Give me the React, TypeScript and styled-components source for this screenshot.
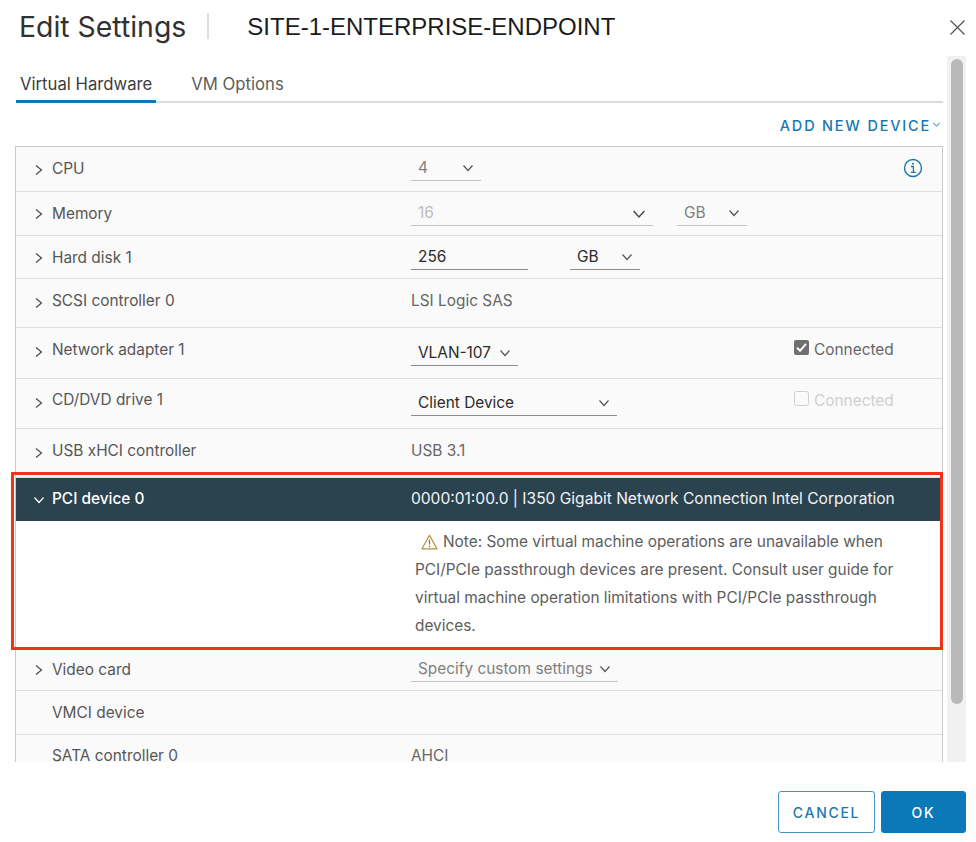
import React from 'react';
import styled, { createGlobalStyle } from 'styled-components';

const GlobalStyle = createGlobalStyle`
    html, body {
        margin: 0;
        padding: 0;
        background: #ffffff;
    }
    body {
        font-family: Inter, "Open Sans", "Liberation Sans", sans-serif;
        color: #565656;
    }
`;

const Dialog = styled.div`
    width: 976px;
    height: 842px;
    overflow: hidden;
    background: #ffffff;
`;

const Header = styled.header`
    height: 56px;
    display: flex;
    align-items: flex-start;
    padding-left: 19px;
    padding-right: 10px;
    box-sizing: border-box;
`;

const Title = styled.h1`
    margin: 10px 0 0;
    font-size: 28.4px;
    line-height: 34px;
    font-weight: 400;
    color: #313131;
    white-space: nowrap;
`;

const TitleDivider = styled.span`
    width: 2px;
    height: 26px;
    margin: 13px 38px 0 21px;
    background: #dedede;
`;

const VmName = styled.h2`
    margin: 11px 0 0;
    font-family: "Liberation Sans", Arial, sans-serif;
    font-size: 24px;
    line-height: 32px;
    font-weight: 400;
    color: #1c1c1c;
    white-space: nowrap;
`;

const CloseButton = styled.button`
    margin: 19px 0 0 auto;
    padding: 0;
    width: 17px;
    height: 17px;
    border: 0;
    background: none;
    display: block;
`;

const Main = styled.main`
    height: 706px;
    display: flex;
    padding-left: 5px;
    padding-right: 10px;
    gap: 4px;
`;

const Content = styled.div`
    width: 928px;
    height: 706px;
    padding-left: 10px;
    overflow: hidden;
`;

const Tabs = styled.nav`
    height: 47px;
    box-sizing: border-box;
    margin-left: 1px;
    display: flex;
    align-items: flex-end;
    border-bottom: 2px solid #dcdcdc;
`;

const Tab = styled.div<{ $active?: boolean }>`
    box-sizing: border-box;
    padding: 20px 4px 0;
    margin-right: ${({ $active }) => ($active ? '31px' : '0')};
    margin-bottom: -2px;
    height: 47px;
    border-bottom: 3px solid ${({ $active }) => ($active ? '#0f78b6' : 'transparent')};
    font-size: 16.7px;
    line-height: 17px;
    color: ${({ $active }) => ($active ? '#3d3d3d' : '#5c5c5c')};
    white-space: nowrap;
`;

const AddRow = styled.div`
    height: 43px;
    display: flex;
    justify-content: flex-end;
    align-items: flex-start;
    gap: 2px;
    padding-top: 15px;
    padding-right: 3px;
    box-sizing: border-box;
`;

const AddLink = styled.span`
    font-size: 14.5px;
    line-height: 16px;
    font-weight: 500;
    letter-spacing: 1.8px;
    color: #1b78ad;
    white-space: nowrap;
`;

const Table = styled.div`
    border-top: 1px solid #c9c9c9;
    border-left: 1px solid #c9c9c9;
    border-right: 1px solid #c9c9c9;
    background: #fafafa;
`;

const Row = styled.div<{ $height: number; $top: number }>`
    height: ${({ $height }) => $height}px;
    box-sizing: border-box;
    border-bottom: 1px solid #dfdfdf;
    padding-top: ${({ $top }) => $top}px;
    display: grid;
    grid-template-columns: 395px 1fr;
    font-size: 15.4px;
    line-height: 18px;
`;

const LabelCell = styled.div`
    display: flex;
    align-items: flex-start;
`;

const ChevronSlot = styled.span<{ $drop: number }>`
    width: 36px;
    height: 18px;
    display: flex;
    justify-content: flex-end;
    padding-right: 8px;
    padding-top: ${({ $drop }) => $drop}px;
    box-sizing: border-box;
    flex-shrink: 0;
`;

const Label = styled.span<{ $flush?: boolean }>`
    margin-top: ${({ $flush }) => ($flush ? '0' : '1px')};
    color: #565656;
    white-space: nowrap;
`;

const ValueCell = styled.div`
    display: flex;
    align-items: flex-start;
`;

const PlainValue = styled.span<{ $flush?: boolean }>`
    margin-top: ${({ $flush }) => ($flush ? '0' : '1px')};
    color: #666666;
    white-space: nowrap;
`;

const Select = styled.div<{ $width: number; $tone?: string; $gap?: number; $drop?: number }>`
    width: ${({ $width }) => $width}px;
    height: 27px;
    box-sizing: border-box;
    margin-top: ${({ $drop }) => ($drop ?? 0) - 5}px;
    margin-right: ${({ $gap }) => $gap ?? 0}px;
    padding: 5px 8px 0 7px;
    display: flex;
    justify-content: space-between;
    align-items: flex-start;
    border-bottom: 1px solid ${({ $tone }) => ($tone === 'dark' ? '#8c8c8c' : '#c4c4c4')};
    color: ${({ $tone }) => ($tone === 'dark' ? '#2b2b2b' : $tone === 'faint' ? '#bdbdbd' : '#808080')};
    white-space: nowrap;
`;

const RowEnd = styled.div`
    margin-left: auto;
    display: flex;
    align-items: flex-start;
`;

const CheckLabel = styled.label<{ $disabled?: boolean }>`
    width: 148px;
    display: flex;
    align-items: flex-start;
    gap: 5px;
    color: ${({ $disabled }) => ($disabled ? '#d0d0d0' : '#666666')};
`;

const CheckText = styled.span`
    margin-top: 1px;
`;

const InfoSlot = styled.span`
    width: 39px;
    display: block;
    margin-top: -1px;
`;

const Highlighted = styled.section`
    position: relative;

    &::after {
        content: '';
        position: absolute;
        left: -5px;
        right: -1px;
        top: -6px;
        bottom: -3px;
        border: 3px solid #ef3418;
        pointer-events: none;
    }
`;

const ExpandedRow = styled.div`
    height: 43px;
    box-sizing: border-box;
    padding-top: 12px;
    margin-right: 2px;
    display: grid;
    grid-template-columns: 395px 1fr;
    font-size: 15.4px;
    line-height: 18px;
    background: #2b424f;
    color: #f2f4f5;
`;

const ExpandedLabel = styled.span`
    font-weight: 500;
    color: #ffffff;
    white-space: nowrap;
`;

const ExpandedValue = styled.span`
    white-space: nowrap;
    font-size: 15.55px;
`;

const Note = styled.div`
    height: 126px;
    box-sizing: border-box;
    margin-right: 2px;
    padding: 7px 40px 0 399px;
    background: #ffffff;
    font-size: 15.4px;
    line-height: 28px;
    color: #5d5d5d;
`;

const WarnIcon = styled.svg`
    width: 17px;
    height: 16px;
    margin-left: 6px;
    margin-right: 5px;
    vertical-align: -3px;
`;

const Scrollbar = styled.div`
    width: 19px;
    height: 706px;
    box-sizing: border-box;
    padding: 3px 3px 0 4px;
    background: #f1f1f1;
`;

const ScrollThumb = styled.div`
    height: 645px;
    border-radius: 6px;
    background: #b9b9b9;
`;

const Footer = styled.footer`
    display: flex;
    justify-content: flex-end;
    gap: 6px;
    padding: 29px 10px 0 0;
`;

const Button = styled.button<{ $primary?: boolean }>`
    width: ${({ $primary }) => ($primary ? '85px' : '97px')};
    height: 42px;
    box-sizing: border-box;
    border-radius: 3px;
    border: 1px solid ${({ $primary }) => ($primary ? '#0b79b8' : '#4b93bf')};
    background: ${({ $primary }) => ($primary ? '#0b79b8' : '#ffffff')};
    color: ${({ $primary }) => ($primary ? '#ffffff' : '#1b78ad')};
    font-family: inherit;
    font-size: 14px;
    font-weight: 500;
    letter-spacing: 1.7px;
    padding: 0;
`;

const Chevron = ({ dir = 'right', size = 10, color = '#4a4a4a' }: { dir?: 'right' | 'down'; size?: number; color?: string }) => (
    <svg width={size} height={size} viewBox="0 0 10 10" fill="none" style={{ flexShrink: 0, overflow: 'visible' }}>
        <path
            d={dir === 'right' ? 'M2 .5 7.5 5 2 9.5' : 'M.5 2.5 5 7.5 9.5 2.5'}
            stroke={color}
            strokeWidth={size < 9 ? 1.4 : 1.2}
        />
    </svg>
);

const SelectChevron = ({ color = '#555555', size = 10 }: { color?: string; size?: number }) => (
    <span style={{ paddingTop: 4, display: 'block', lineHeight: 0 }}>
        <Chevron dir="down" size={size} color={color} />
    </span>
);

export default function App() {
    return (
        <Dialog>
            <GlobalStyle />
            <Header>
                <Title>Edit Settings</Title>
                <TitleDivider />
                <VmName>SITE-1-ENTERPRISE-ENDPOINT</VmName>
                <CloseButton aria-label="Close">
                    <svg width="17" height="17" viewBox="0 0 17 17" fill="none">
                        <path d="M1.5 1.5l14 14M15.5 1.5l-14 14" stroke="#555555" strokeWidth="1.3" />
                    </svg>
                </CloseButton>
            </Header>

            <Main>
                <Content>
                    <Tabs>
                        <Tab $active>Virtual Hardware</Tab>
                        <Tab>VM Options</Tab>
                    </Tabs>
                    <AddRow>
                        <AddLink>ADD NEW DEVICE</AddLink>
                        <span style={{ lineHeight: 0, paddingTop: 3 }}>
                            <Chevron dir="down" size={7} color="#1b78ad" />
                        </span>
                    </AddRow>

                    <Table>
                        <Row $height={45} $top={12}>
                            <LabelCell>
                                <ChevronSlot $drop={6}><Chevron /></ChevronSlot>
                                <Label>CPU</Label>
                            </LabelCell>
                            <ValueCell>
                                <Select $width={70}>
                                    4
                                    <SelectChevron />
                                </Select>
                                <RowEnd>
                                    <InfoSlot>
                                        <svg width="20" height="20" viewBox="0 0 20 20" fill="none">
                                            <circle cx="10" cy="10" r="8.5" stroke="#1b78ad" strokeWidth="1.4" />
                                            <path d="M8 8.5h2.4v5.6M7.8 14.4h5" stroke="#1b78ad" strokeWidth="1.3" />
                                            <circle cx="10" cy="5.8" r="1" fill="#1b78ad" />
                                        </svg>
                                    </InfoSlot>
                                </RowEnd>
                            </ValueCell>
                        </Row>
                        <Row $height={44} $top={12}>
                            <LabelCell>
                                <ChevronSlot $drop={5}><Chevron /></ChevronSlot>
                                <Label>Memory</Label>
                            </LabelCell>
                            <ValueCell>
                                <Select $width={242} $tone="faint" $gap={24}>
                                    16
                                    <SelectChevron size={12} color="#4a4a4a" />
                                </Select>
                                <Select $width={70}>
                                    GB
                                    <SelectChevron />
                                </Select>
                            </ValueCell>
                        </Row>
                        <Row $height={43} $top={12}>
                            <LabelCell>
                                <ChevronSlot $drop={5}><Chevron /></ChevronSlot>
                                <Label>Hard disk 1</Label>
                            </LabelCell>
                            <ValueCell>
                                <Select $width={117} $tone="dark" $gap={42}>
                                    256
                                </Select>
                                <Select $width={70} $tone="dark">
                                    GB
                                    <SelectChevron />
                                </Select>
                            </ValueCell>
                        </Row>
                        <Row $height={49} $top={12}>
                            <LabelCell>
                                <ChevronSlot $drop={7}><Chevron /></ChevronSlot>
                                <Label>SCSI controller 0</Label>
                            </LabelCell>
                            <ValueCell>
                                <PlainValue>LSI Logic SAS</PlainValue>
                            </ValueCell>
                        </Row>
                        <Row $height={51} $top={12}>
                            <LabelCell>
                                <ChevronSlot $drop={7}><Chevron /></ChevronSlot>
                                <Label>Network adapter 1</Label>
                            </LabelCell>
                            <ValueCell>
                                <Select $width={107} $tone="dark" $drop={4}>
                                    VLAN-107
                                    <SelectChevron />
                                </Select>
                                <RowEnd>
                                    <CheckLabel>
                                        <svg width="15" height="15" viewBox="0 0 15 15" fill="none">
                                            <rect width="15" height="15" rx="2" fill="#6f6f6f" />
                                            <path d="M3 7.6l3 3.2L12 3.8" stroke="#ffffff" strokeWidth="2" />
                                        </svg>
                                        <CheckText>Connected</CheckText>
                                    </CheckLabel>
                                </RowEnd>
                            </ValueCell>
                        </Row>
                        <Row $height={50} $top={12}>
                            <LabelCell>
                                <ChevronSlot $drop={7}><Chevron /></ChevronSlot>
                                <Label $flush>CD/DVD drive 1</Label>
                            </LabelCell>
                            <ValueCell>
                                <Select $width={206} $tone="dark" $drop={3}>
                                    Client Device
                                    <SelectChevron />
                                </Select>
                                <RowEnd>
                                    <CheckLabel $disabled>
                                        <svg width="15" height="15" viewBox="0 0 15 15" fill="none">
                                            <rect x=".5" y=".5" width="14" height="14" rx="2" fill="#fafafa" stroke="#cfcfcf" />
                                        </svg>
                                        <CheckText>Connected</CheckText>
                                    </CheckLabel>
                                </RowEnd>
                            </ValueCell>
                        </Row>
                        <Row $height={49} $top={12}>
                            <LabelCell>
                                <ChevronSlot $drop={7}><Chevron /></ChevronSlot>
                                <Label>USB xHCI controller</Label>
                            </LabelCell>
                            <ValueCell>
                                <PlainValue>USB 3.1</PlainValue>
                            </ValueCell>
                        </Row>

                        <Highlighted>
                            <ExpandedRow>
                                <LabelCell>
                                    <ChevronSlot $drop={5}>
                                        <Chevron dir="down" color="#ffffff" />
                                    </ChevronSlot>
                                    <ExpandedLabel>PCI device 0</ExpandedLabel>
                                </LabelCell>
                                <ExpandedValue>0000:01:00.0 | I350 Gigabit Network Connection Intel Corporation</ExpandedValue>
                            </ExpandedRow>
                            <Note>
                                <WarnIcon viewBox="0 0 17 16" fill="none">
                                    <path d="M8.5 1.2 16 14.8H1z" stroke="#b58e3c" strokeWidth="1.2" strokeLinejoin="round" />
                                    <path d="M8.5 5.6v5" stroke="#8a7040" strokeWidth="1.2" />
                                    <circle cx="8.5" cy="12.5" r=".8" fill="#8a7040" />
                                </WarnIcon>
                                Note: Some virtual machine operations are unavailable when PCI/PCIe passthrough devices are present. Consult user guide for virtual machine operation limitations with PCI/PCIe passthrough devices.
                            </Note>
                        </Highlighted>

                        <Row $height={44} $top={13}>
                            <LabelCell>
                                <ChevronSlot $drop={5}><Chevron /></ChevronSlot>
                                <Label>Video card</Label>
                            </LabelCell>
                            <ValueCell>
                                <Select $width={207}>
                                    Specify custom settings
                                    <SelectChevron />
                                </Select>
                            </ValueCell>
                        </Row>
                        <Row $height={44} $top={12}>
                            <LabelCell>
                                <ChevronSlot $drop={5} />
                                <Label>VMCI device</Label>
                            </LabelCell>
                        </Row>
                        <Row $height={44} $top={12}>
                            <LabelCell>
                                <ChevronSlot $drop={5} />
                                <Label $flush>SATA controller 0</Label>
                            </LabelCell>
                            <ValueCell>
                                <PlainValue $flush>AHCI</PlainValue>
                            </ValueCell>
                        </Row>
                    </Table>
                </Content>
                <Scrollbar>
                    <ScrollThumb />
                </Scrollbar>
            </Main>

            <Footer>
                <Button>CANCEL</Button>
                <Button $primary>OK</Button>
            </Footer>
        </Dialog>
    );
}
